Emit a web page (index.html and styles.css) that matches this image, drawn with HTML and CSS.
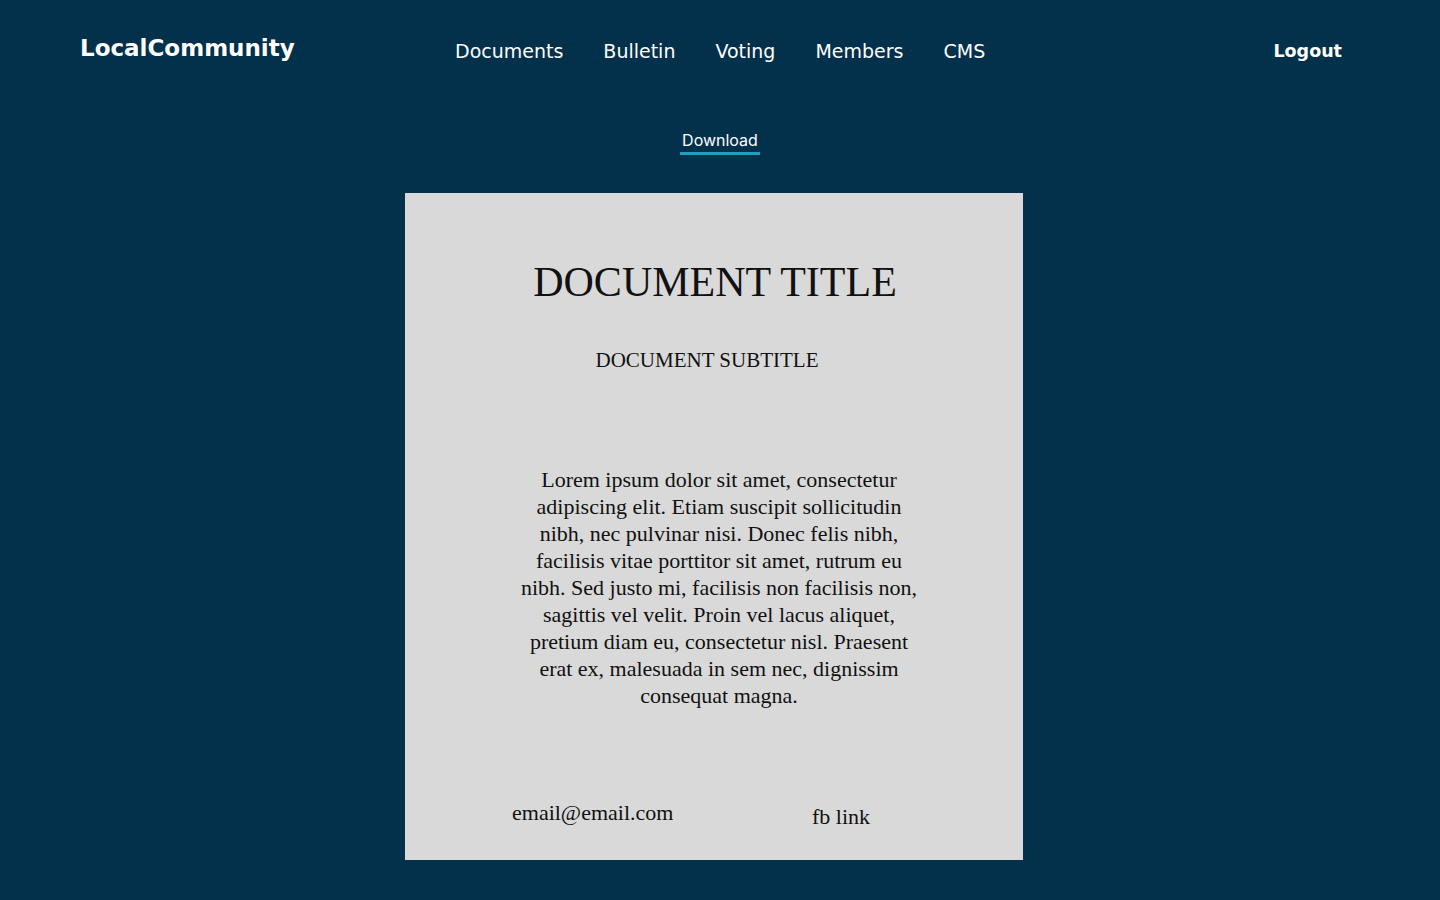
FILE: index.html
```html
<!DOCTYPE html>
<html lang="en">
<head>
<meta charset="utf-8">
<title>LocalCommunity</title>
<link rel="stylesheet" href="styles.css">
</head>
<body>
<header class="topbar">
  <div class="logo">LocalCommunity</div>
  <nav class="nav">
    <a href="#">Documents</a>
    <a href="#">Bulletin</a>
    <a href="#">Voting</a>
    <a href="#">Members</a>
    <a href="#">CMS</a>
  </nav>
  <a class="logout" href="#">Logout</a>
</header>
<main class="main">
  <div class="tabs"><a class="tab active" href="#">Download</a></div>
  <article class="doc">
    <h1 class="doc-title">DOCUMENT TITLE</h1>
    <h2 class="doc-subtitle">DOCUMENT SUBTITLE</h2>
    <p class="doc-body">Lorem ipsum dolor sit amet, consectetur adipiscing elit. Etiam suscipit sollicitudin nibh, nec pulvinar nisi. Donec felis nibh, facilisis vitae porttitor sit amet, rutrum eu nibh. Sed justo mi, facilisis non facilisis non, sagittis vel velit. Proin vel lacus aliquet, pretium diam eu, consectetur nisl. Praesent erat ex, malesuada in sem nec, dignissim consequat magna.</p>
    <div class="doc-footer">
      <span class="email">email@email.com</span>
      <span class="fb">fb link</span>
    </div>
  </article>
</main>
</body>
</html>
```
FILE: styles.css
```css
html, body {
  margin: 0;
  padding: 0;
  background: #03304a;
  height: 100%;
}
body {
  font-family: "DejaVu Sans", sans-serif;
  color: #fff;
}
a { color: inherit; text-decoration: none; }

.topbar {
  display: flex;
  align-items: center;
  height: 100px;
  padding: 2px 98px 0 80px;
  box-sizing: border-box;
}
.logo {
  font-size: 23px;
  font-weight: 700;
  width: 375px;
  margin-top: -6px;
}
.nav {
  display: flex;
  gap: 40px;
  font-size: 19px;
}
.logout {
  margin-left: auto;
  font-size: 17.5px;
  font-weight: 700;
}

.main {
  display: flex;
  flex-direction: column;
  align-items: center;
}
.tabs {
  display: flex;
  justify-content: center;
  margin-top: 30px;
}
.tab {
  font-family: Inter, sans-serif;
  font-size: 16px;
  padding: 0 2px 1px;
  border-bottom: 3px solid #219ebc;
  line-height: 21px;
}
.doc {
  margin-top: 38px;
  width: 618px;
  height: 667px;
  box-sizing: border-box;
  background: #d9d9d9;
  color: #111;
  font-family: "Liberation Serif", serif;
  display: flex;
  flex-direction: column;
  align-items: center;
  margin-left: -12px;
  padding-top: 64px;
}
.doc-title {
  margin: 0;
  font-weight: 400;
  font-size: 42px;
  line-height: 50px;
  padding-left: 2px;
}
.doc-subtitle {
  margin: 38px 0 0;
  font-weight: 400;
  font-size: 21px;
  line-height: 30px;
  margin-right: 14px;
}
.doc-body {
  margin: 91px 0 0;
  width: 402px;
  text-align: center;
  font-size: 22px;
  line-height: 27px;
  padding-left: 10px;
}
.doc-footer {
  margin-top: auto;
  margin-bottom: 30px;
  display: flex;
  width: 358px;
  justify-content: space-between;
  font-size: 22px;
  margin-right: 46px;
}
.fb { margin-top: 4px; }
```
